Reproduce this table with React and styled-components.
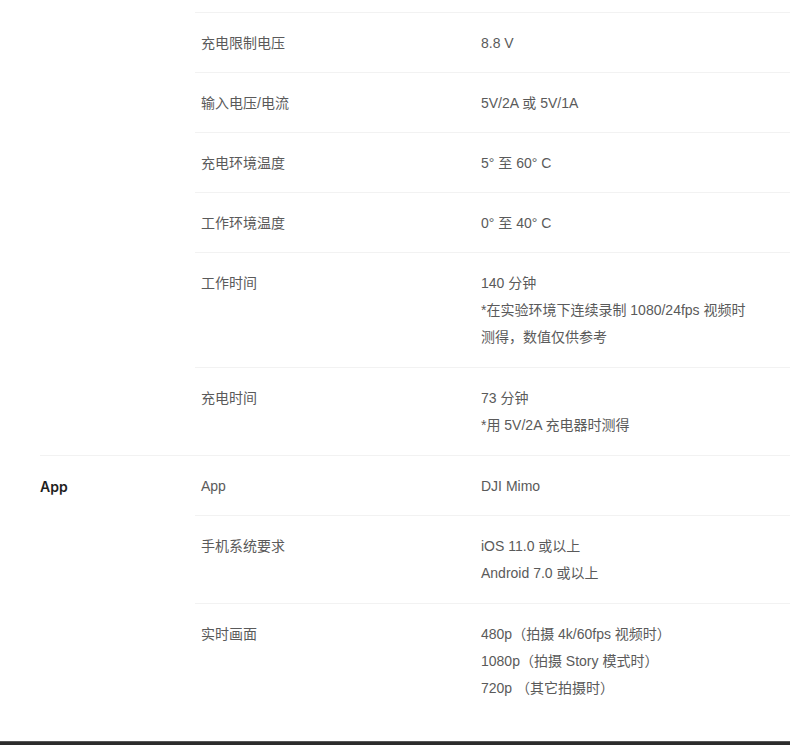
import React from "react";
import styled, { createGlobalStyle } from "styled-components";

const GlobalStyle = createGlobalStyle`
  html, body { margin: 0; padding: 0; background: #fff; }
  body {
    font-family: "Helvetica Neue", "Liberation Sans", "Noto Sans CJK SC", sans-serif;
    -webkit-font-smoothing: antialiased;
  }
`;

const Page = styled.div`
  width: 790px;
  min-height: 745px;
  display: flex;
  flex-direction: column;
  padding-top: 12px;
  box-sizing: border-box;
`;

const Specs = styled.div`
  flex: 1;
  display: flex;
  flex-direction: column;
`;

const Group = styled.section`
  display: grid;
  grid-template-columns: 155px 1fr;
  margin-left: 40px;
  border-top: ${(p) => (p.$topBorder ? "1px solid #f2f2f2" : "none")};
  padding-bottom: ${(p) => (p.$last ? "23px" : "0")};
`;

const Category = styled.div`
  font-family: Inter, "Noto Sans CJK SC", sans-serif;
  font-size: 14px;
  line-height: 27px;
  font-weight: 600;
  color: #1f1f1f;
  padding-top: 17px;
`;

const Rows = styled.div`
  display: flex;
  flex-direction: column;
`;

const Row = styled.div`
  display: grid;
  grid-template-columns: 280px 1fr;
  border-top: ${(p) => (p.$noBorder ? "none" : "1px solid #f2f2f2")};
  padding: 17px 30px ${(p) => (p.$multi ? "16px" : "15px")} 6px;
  font-size: 14px;
  line-height: 27px;
  color: #5a5a5a;
`;

const Label = styled.div``;

const Value = styled.div`
  display: flex;
  flex-direction: column;
  max-width: 272px;
`;

const Line = styled.span``;

const Footer = styled.div`
  height: 5px;
  background: #2c2c2c;
  border-top: 1px solid #555;
`;

const groups = [
  {
    category: "",
    rows: [
      { label: "充电限制电压", value: ["8.8 V"] },
      { label: "输入电压/电流", value: ["5V/2A 或 5V/1A"] },
      { label: "充电环境温度", value: ["5° 至 60° C"] },
      { label: "工作环境温度", value: ["0° 至 40° C"] },
      {
        label: "工作时间",
        value: ["140 分钟", "*在实验环境下连续录制 1080/24fps 视频时测得，数值仅供参考"],
      },
      { label: "充电时间", value: ["73 分钟", "*用 5V/2A 充电器时测得"] },
    ],
  },
  {
    category: "App",
    rows: [
      { label: "App", value: ["DJI Mimo"] },
      { label: "手机系统要求", value: ["iOS 11.0 或以上", "Android 7.0 或以上"] },
      {
        label: "实时画面",
        value: ["480p（拍摄 4k/60fps 视频时）", "1080p（拍摄 Story 模式时）", "720p （其它拍摄时）"],
      },
    ],
  },
];

export default function App() {
  return (
    <>
      <GlobalStyle />
      <Page>
        <Specs>
          {groups.map((g, gi) => (
            <Group key={gi} $topBorder={gi > 0} $last={gi === groups.length - 1}>
              <Category>{g.category}</Category>
              <Rows>
                {g.rows.map((r, ri) => (
                  <Row
                    key={ri}
                    $noBorder={gi > 0 && ri === 0}
                    $multi={r.value.length > 1}
                  >
                    <Label>{r.label}</Label>
                    <Value>
                      {r.value.map((v, vi) => (
                        <Line key={vi}>{v}</Line>
                      ))}
                    </Value>
                  </Row>
                ))}
              </Rows>
            </Group>
          ))}
        </Specs>
        <Footer />
      </Page>
    </>
  );
}
